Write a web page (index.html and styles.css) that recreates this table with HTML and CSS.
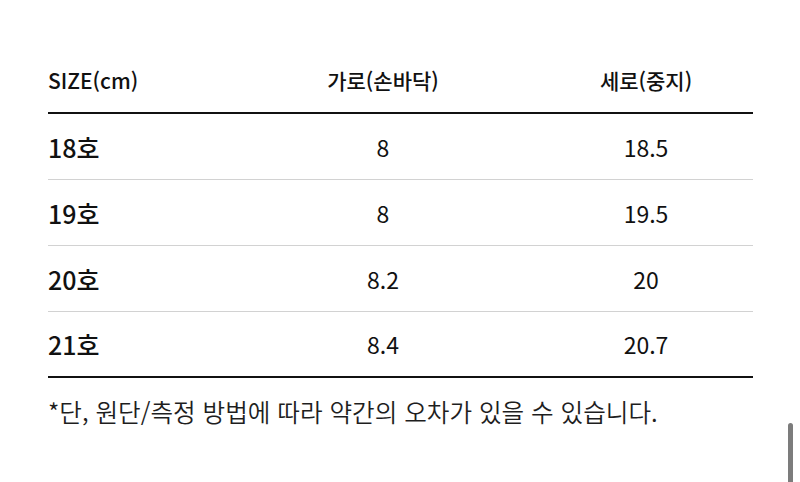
FILE: index.html
```html
<!DOCTYPE html>
<html lang="ko">
<head>
<meta charset="utf-8">
<link rel="stylesheet" href="styles.css">
</head>
<body>
<div class="page">
  <div class="size-table">
    <div class="row head">
      <div class="cell c1">SIZE(cm)</div>
      <div class="cell c2">가로(손바닥)</div>
      <div class="cell c3">세로(중지)</div>
    </div>
    <div class="row">
      <div class="cell c1 label">18호</div>
      <div class="cell c2">8</div>
      <div class="cell c3">18.5</div>
    </div>
    <div class="row">
      <div class="cell c1 label">19호</div>
      <div class="cell c2">8</div>
      <div class="cell c3">19.5</div>
    </div>
    <div class="row">
      <div class="cell c1 label">20호</div>
      <div class="cell c2">8.2</div>
      <div class="cell c3">20</div>
    </div>
    <div class="row last">
      <div class="cell c1 label">21호</div>
      <div class="cell c2">8.4</div>
      <div class="cell c3">20.7</div>
    </div>
  </div>
  <p class="note">*단, 원단/측정 방법에 따라 약간의 오차가 있을 수 있습니다.</p>
</div>
<div class="scrollbar"></div>
</body>
</html>
```
FILE: styles.css
```css
html, body {
  margin: 0;
  padding: 0;
  background: #ffffff;
}
body {
  width: 800px;
  height: 482px;
  overflow: hidden;
  position: relative;
  font-family: "Noto Sans CJK KR", "Noto Sans", sans-serif;
  color: #111111;
}
.page {
  padding: 0 0 0 48px;
}
.size-table {
  width: 705px;
}
.row {
  display: grid;
  grid-template-columns: 179px 312px 214px;
  height: 65px;
  align-items: center;
  border-bottom: 1px solid #d2d2d2;
  font-size: 23px;
  font-weight: 400;
}
.row.head {
  height: 32px;
  padding: 64px 0 16px;
  border-bottom: 2px solid #111111;
  font-size: 21px;
  font-weight: 500;
  line-height: 32px;
}
.row.last {
  height: 64px;
  border-bottom: 2px solid #111111;
}
.cell {
  white-space: nowrap;
}
.c1 {
  text-align: left;
}
.c2, .c3 {
  text-align: center;
}
.label {
  font-size: 25px;
  font-weight: 500;
}
.note {
  margin: 16px 0 0;
  font-size: 24.6px;
  line-height: 34px;
  font-weight: 350;
  color: #1e1e1e;
}
.scrollbar {
  position: absolute;
  left: 788px;
  top: 423px;
  width: 5px;
  height: 70px;
  border-radius: 3px;
  background: #7c7c7c;
}
```
